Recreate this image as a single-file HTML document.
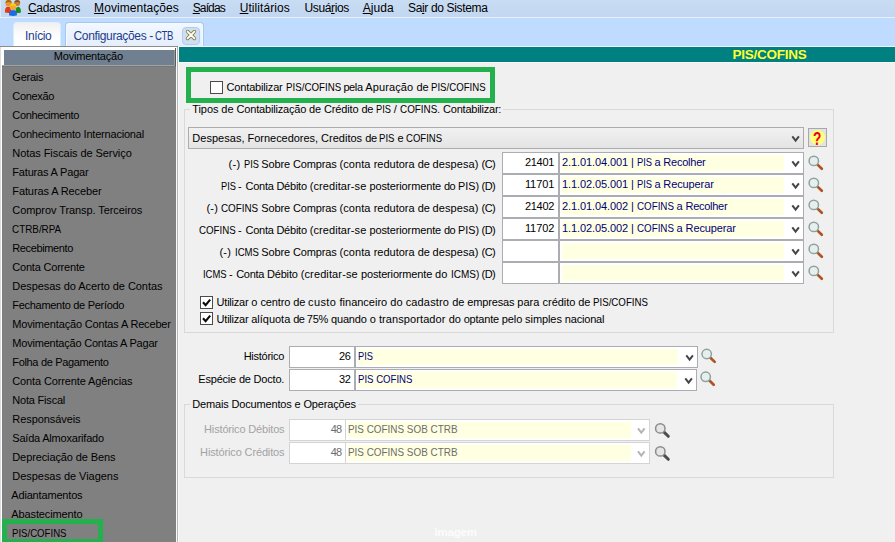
<!DOCTYPE html>
<html><head><meta charset="utf-8"><title>Configurações - CTB</title><style>
html,body{margin:0;padding:0;}
body{width:895px;height:542px;overflow:hidden;position:relative;background:#f0f0f0;font-family:"Liberation Sans",sans-serif;font-size:11px;color:#000;}
.a{position:absolute;white-space:pre;}
.b{box-sizing:border-box;}
.num{height:22px;box-sizing:border-box;border:1px solid #abadb3;background:#fff;}
.cmb{height:22px;box-sizing:border-box;border:1px solid #abadb3;background:#fff;}
.cmb i{position:absolute;left:2px;top:2px;bottom:2px;background:#ffffe1;}
.cb{width:13px;height:13px;box-sizing:border-box;border:1px solid #4a4a4a;background:#fff;}
.gb{border:1px solid #d9d9d9;box-sizing:border-box;}
</style></head><body>
<div class="a" style="left:0;top:0;width:895px;height:17px;background:linear-gradient(#c8dcf3,#c2d7f0);"></div>
<div class="a" style="left:0;top:17px;width:895px;height:1px;background:#e9eff7;"></div>
<div class="a" style="left:0;top:18px;width:895px;height:28px;background:#bfdbff;"></div>
<div class="a" style="left:0;top:46px;width:178px;height:1px;background:#8c8c8c;"></div>
<div class="a" style="left:178px;top:46px;width:717px;height:1px;background:#eef4fc;"></div>
<div class="a" style="left:0;top:0;width:1px;height:17px;background:#dde9f7;"></div>
<svg class="a" style="left:4px;top:0" width="18" height="17" viewBox="0 0 18 17"><path d="M0.9 12.6 Q0.6 6.8 4.2 6.8 Q7 6.8 7 10 L7 12.9 Q3.5 13.4 0.9 12.6Z" fill="#e53a18"/><path d="M11.6 12.9 L11.6 9.5 Q12 6.8 14.2 6.8 Q17 7 16.9 12.5 Q14 13.3 11.6 12.9Z" fill="#1c8c1c"/><circle cx="4.6" cy="3.4" r="3.1" fill="#e8982e"/><path d="M1.5 3.2 A3.1 3.1 0 0 1 7.7 3.2 Q4.6 0.8 1.5 3.2Z" fill="#a8620e"/><circle cx="13.2" cy="3.2" r="2.9" fill="#c9813a"/><path d="M10.3 3 A2.9 2.9 0 0 1 16.1 3 Q13.2 0.9 10.3 3Z" fill="#8a5220"/><path d="M5 15.2 Q4.8 10 9 10 Q13.2 10 13 15.2 Q9 16.6 5 15.2Z" fill="#1c6be2"/><circle cx="9.1" cy="7" r="3.2" fill="#f4a53c"/><path d="M5.9 6.6 A3.2 3.2 0 0 1 12.3 6.6 Q9.1 4.2 5.9 6.6Z" fill="#f6d400"/></svg>
<div class="a b" style="left:13px;top:22px;width:48px;height:24px;border:1px solid #d3f0ff;border-top-color:#e6eef6;border-bottom:none;border-radius:4px 4px 0 0;background:linear-gradient(#f0f0f0,#fbfbfb 45%,#fff 70%);"></div>
<div class="a b" style="left:65px;top:22px;width:139px;height:24px;border:1px solid #a9c6ee;border-bottom:none;border-radius:4px 4px 0 0;background:linear-gradient(#f3f8ff,#e4eefb);box-shadow:inset -1px 1px 0 #f4fbff,inset 1px 0 0 #f4fbff;"></div>
<div class="a b" style="left:182px;top:27px;width:18px;height:18px;border:1px solid #b3cbec;border-radius:4px;background:#cddff5;"></div>
<svg class="a" style="left:184.5px;top:29.4px" width="12" height="12" viewBox="0 0 12 12"><path d="M2.6 2.6 L9.4 9.4 M9.4 2.6 L2.6 9.4" stroke="#8a7a35" stroke-width="3.5" stroke-linecap="round"/><path d="M2.6 2.6 L9.4 9.4 M9.4 2.6 L2.6 9.4" stroke="#fff" stroke-width="1.9" stroke-linecap="round"/></svg>
<div class="a" style="left:0;top:47px;width:1px;height:495px;background:#dcdcdc;"></div>
<div class="a" style="left:1px;top:47px;width:175px;height:19px;background:#fff;"></div>
<div class="a" style="left:1px;top:66px;width:1px;height:476px;background:#fff;"></div>
<div class="a" style="left:2px;top:66px;width:174px;height:476px;background:#808080;"></div>
<div class="a" style="left:2px;top:65px;width:173px;height:1px;background:#a2a2a2;"></div>
<div class="a" style="left:2px;top:66px;width:174px;height:1px;background:#767676;"></div>
<div class="a" style="left:4px;top:50px;width:170px;height:15px;background:#708090;"></div>
<div class="a" style="left:174px;top:50px;width:1px;height:16px;background:#9a9a9a;"></div>
<div class="a" style="left:175px;top:48px;width:1px;height:18px;background:#5a5a5a;"></div>
<div class="a" style="left:176px;top:47px;width:3px;height:495px;background:#fafafa;"></div>
<div class="a" style="left:177px;top:47px;width:1px;height:495px;background:#b4b4b4;"></div>
<div class="a b" style="left:2px;top:519px;width:101px;height:25px;border:5px solid #22b14c;"></div>
<div class="a" style="left:179px;top:47px;width:716px;height:15px;background:#008080;"></div>
<div class="a" style="left:179px;top:62px;width:716px;height:1px;background:#fbfbfb;"></div>
<div class="a b" style="left:186px;top:67px;width:309px;height:36px;border:5px solid #22b14c;"></div>
<div class="a cb" style="left:210px;top:81px"></div>
<div class="a gb" style="left:184px;top:109px;width:650px;height:224px;"></div>
<div class="a" style="left:190px;top:104px;width:313px;height:10px;background:#f0f0f0;"></div>
<div class="a b" style="left:188px;top:127px;width:616px;height:22px;border:1px solid #acacac;background:linear-gradient(#f1f1f1,#e4e4e4);"></div>
<svg class="a" style="left:790px;top:135px" width="11" height="9" viewBox="0 0 11 9"><path transform="translate(0.6 0.1)" d="M1.7 1.3 L5 5.5 L8.3 1.3" fill="none" stroke="#454545" stroke-width="2"/></svg>
<div class="a b" style="left:808px;top:128px;width:19px;height:19px;border:1px solid #a8a8a8;background:#e3e3e3;"></div>
<div class="a" style="left:810px;top:130px;width:15px;height:15px;border-radius:8px;background:#ffff78;"></div>
<div class="a num" style="left:502px;width:57px;top:152px"></div>
<div class="a cmb" style="left:559px;width:245px;top:152px"><i style="width:222px"></i></div>
<svg class="a" style="left:790px;top:160px" width="11" height="9" viewBox="0 0 11 9"><path transform="translate(0.6 0.1)" d="M1.7 1.3 L5 5.5 L8.3 1.3" fill="none" stroke="#454545" stroke-width="2"/></svg>
<svg class="a" style="left:806px;top:153px" width="19" height="19" viewBox="0 0 19 19"><g transform="translate(0.8 0.9)"><line x1="10.7" y1="10.7" x2="15" y2="14.9" stroke="#ad5422" stroke-width="2.7" stroke-linecap="round"/><circle cx="7" cy="7" r="4.7" fill="#e7eeee" stroke="#8da2a0" stroke-width="1.5"/></g></svg>
<div class="a num" style="left:502px;width:57px;top:174px"></div>
<div class="a cmb" style="left:559px;width:245px;top:174px"><i style="width:222px"></i></div>
<svg class="a" style="left:790px;top:182px" width="11" height="9" viewBox="0 0 11 9"><path transform="translate(0.6 0.1)" d="M1.7 1.3 L5 5.5 L8.3 1.3" fill="none" stroke="#454545" stroke-width="2"/></svg>
<svg class="a" style="left:806px;top:175px" width="19" height="19" viewBox="0 0 19 19"><g transform="translate(0.8 0.9)"><line x1="10.7" y1="10.7" x2="15" y2="14.9" stroke="#ad5422" stroke-width="2.7" stroke-linecap="round"/><circle cx="7" cy="7" r="4.7" fill="#e7eeee" stroke="#8da2a0" stroke-width="1.5"/></g></svg>
<div class="a num" style="left:502px;width:57px;top:196px"></div>
<div class="a cmb" style="left:559px;width:245px;top:196px"><i style="width:222px"></i></div>
<svg class="a" style="left:790px;top:204px" width="11" height="9" viewBox="0 0 11 9"><path transform="translate(0.6 0.1)" d="M1.7 1.3 L5 5.5 L8.3 1.3" fill="none" stroke="#454545" stroke-width="2"/></svg>
<svg class="a" style="left:806px;top:197px" width="19" height="19" viewBox="0 0 19 19"><g transform="translate(0.8 0.9)"><line x1="10.7" y1="10.7" x2="15" y2="14.9" stroke="#ad5422" stroke-width="2.7" stroke-linecap="round"/><circle cx="7" cy="7" r="4.7" fill="#e7eeee" stroke="#8da2a0" stroke-width="1.5"/></g></svg>
<div class="a num" style="left:502px;width:57px;top:218px"></div>
<div class="a cmb" style="left:559px;width:245px;top:218px"><i style="width:222px"></i></div>
<svg class="a" style="left:790px;top:226px" width="11" height="9" viewBox="0 0 11 9"><path transform="translate(0.6 0.1)" d="M1.7 1.3 L5 5.5 L8.3 1.3" fill="none" stroke="#454545" stroke-width="2"/></svg>
<svg class="a" style="left:806px;top:219px" width="19" height="19" viewBox="0 0 19 19"><g transform="translate(0.8 0.9)"><line x1="10.7" y1="10.7" x2="15" y2="14.9" stroke="#ad5422" stroke-width="2.7" stroke-linecap="round"/><circle cx="7" cy="7" r="4.7" fill="#e7eeee" stroke="#8da2a0" stroke-width="1.5"/></g></svg>
<div class="a num" style="left:502px;width:57px;top:240px"></div>
<div class="a cmb" style="left:559px;width:245px;top:240px"><i style="width:222px"></i></div>
<svg class="a" style="left:790px;top:248px" width="11" height="9" viewBox="0 0 11 9"><path transform="translate(0.6 0.1)" d="M1.7 1.3 L5 5.5 L8.3 1.3" fill="none" stroke="#454545" stroke-width="2"/></svg>
<svg class="a" style="left:806px;top:241px" width="19" height="19" viewBox="0 0 19 19"><g transform="translate(0.8 0.9)"><line x1="10.7" y1="10.7" x2="15" y2="14.9" stroke="#ad5422" stroke-width="2.7" stroke-linecap="round"/><circle cx="7" cy="7" r="4.7" fill="#e7eeee" stroke="#8da2a0" stroke-width="1.5"/></g></svg>
<div class="a num" style="left:502px;width:57px;top:262px"></div>
<div class="a cmb" style="left:559px;width:245px;top:262px"><i style="width:222px"></i></div>
<svg class="a" style="left:790px;top:270px" width="11" height="9" viewBox="0 0 11 9"><path transform="translate(0.6 0.1)" d="M1.7 1.3 L5 5.5 L8.3 1.3" fill="none" stroke="#454545" stroke-width="2"/></svg>
<svg class="a" style="left:806px;top:263px" width="19" height="19" viewBox="0 0 19 19"><g transform="translate(0.8 0.9)"><line x1="10.7" y1="10.7" x2="15" y2="14.9" stroke="#ad5422" stroke-width="2.7" stroke-linecap="round"/><circle cx="7" cy="7" r="4.7" fill="#e7eeee" stroke="#8da2a0" stroke-width="1.5"/></g></svg>
<div class="a cb" style="left:200px;top:296px"></div>
<svg class="a" style="left:201px;top:297px" width="11" height="11" viewBox="0 0 11 11"><path d="M2 5.2 L4.6 8.2 L9.2 2.6" fill="none" stroke="#0a0a0a" stroke-width="2.1"/></svg>
<div class="a cb" style="left:200px;top:312px"></div>
<svg class="a" style="left:201px;top:313px" width="11" height="11" viewBox="0 0 11 11"><path d="M2 5.2 L4.6 8.2 L9.2 2.6" fill="none" stroke="#0a0a0a" stroke-width="2.1"/></svg>
<div class="a num" style="left:289px;width:66px;top:346px"></div>
<div class="a cmb" style="left:355px;width:343px;top:346px"><i style="width:320px"></i></div>
<svg class="a" style="left:684px;top:354px" width="11" height="9" viewBox="0 0 11 9"><path transform="translate(0.6 0.1)" d="M1.7 1.3 L5 5.5 L8.3 1.3" fill="none" stroke="#454545" stroke-width="2"/></svg>
<svg class="a" style="left:699px;top:347px" width="19" height="19" viewBox="0 0 19 19"><g transform="translate(0.7 0.0)"><line x1="10.7" y1="10.7" x2="15" y2="14.9" stroke="#ad5422" stroke-width="2.7" stroke-linecap="round"/><circle cx="7" cy="7" r="4.7" fill="#e7eeee" stroke="#8da2a0" stroke-width="1.5"/></g></svg>
<div class="a num" style="left:289px;width:66px;top:369px"></div>
<div class="a cmb" style="left:355px;width:342px;top:369px"><i style="width:319px"></i></div>
<svg class="a" style="left:683px;top:377px" width="11" height="9" viewBox="0 0 11 9"><path transform="translate(0.6 0.1)" d="M1.7 1.3 L5 5.5 L8.3 1.3" fill="none" stroke="#454545" stroke-width="2"/></svg>
<svg class="a" style="left:698px;top:369px" width="19" height="19" viewBox="0 0 19 19"><g transform="translate(0.7 0.8)"><line x1="10.7" y1="10.7" x2="15" y2="14.9" stroke="#ad5422" stroke-width="2.7" stroke-linecap="round"/><circle cx="7" cy="7" r="4.7" fill="#e7eeee" stroke="#8da2a0" stroke-width="1.5"/></g></svg>
<div class="a gb" style="left:184px;top:404px;width:650px;height:74px;"></div>
<div class="a" style="left:190px;top:399px;width:168px;height:10px;background:#f0f0f0;"></div>
<div class="a num" style="left:289px;width:57px;top:419px;border-color:#d4d4d4"></div>
<div class="a cmb" style="left:345px;width:305px;top:419px;border-color:#d4d4d4"><i style="width:283px"></i></div>
<svg class="a" style="left:636px;top:427px" width="11" height="9" viewBox="0 0 11 9"><path transform="translate(0.3 0.1)" d="M1.7 1.3 L5 5.5 L8.3 1.3" fill="none" stroke="#b4b4b4" stroke-width="2"/></svg>
<svg class="a" style="left:653px;top:421px" width="19" height="19" viewBox="0 0 19 19"><g transform="translate(0.3 0.4)"><line x1="10.7" y1="10.7" x2="15" y2="14.9" stroke="#4c4c4c" stroke-width="3" stroke-linecap="round"/><circle cx="7" cy="7" r="4.7" fill="#e5e5e5" stroke="#8c8c8c" stroke-width="1.5"/></g></svg>
<div class="a num" style="left:289px;width:57px;top:442px;border-color:#d4d4d4"></div>
<div class="a cmb" style="left:345px;width:305px;top:442px;border-color:#d4d4d4"><i style="width:283px"></i></div>
<svg class="a" style="left:636px;top:450px" width="11" height="9" viewBox="0 0 11 9"><path transform="translate(0.3 0.1)" d="M1.7 1.3 L5 5.5 L8.3 1.3" fill="none" stroke="#b4b4b4" stroke-width="2"/></svg>
<svg class="a" style="left:653px;top:444px" width="19" height="19" viewBox="0 0 19 19"><g transform="translate(0.3 0.4)"><line x1="10.7" y1="10.7" x2="15" y2="14.9" stroke="#4c4c4c" stroke-width="3" stroke-linecap="round"/><circle cx="7" cy="7" r="4.7" fill="#e5e5e5" stroke="#8c8c8c" stroke-width="1.5"/></g></svg>
<div class="a" style="top:-0.16px;font-size:12px;line-height:16px;height:16px;letter-spacing:-0.300px;left:27.90px;"><u>C</u>adastros</div>
<div class="a" style="top:-0.16px;font-size:12px;line-height:16px;height:16px;letter-spacing:0.054px;left:94.10px;"><u>M</u>ovimentações</div>
<div class="a" style="top:-0.16px;font-size:12px;line-height:16px;height:16px;letter-spacing:-0.872px;left:192.70px;"><u>S</u>aídas</div>
<div class="a" style="top:-0.16px;font-size:12px;line-height:16px;height:16px;letter-spacing:0.066px;left:239.70px;"><u>U</u>tilitários</div>
<div class="a" style="top:-0.16px;font-size:12px;line-height:16px;height:16px;letter-spacing:-0.380px;left:304.50px;">Usuá<u>r</u>ios</div>
<div class="a" style="top:-0.16px;font-size:12px;line-height:16px;height:16px;letter-spacing:0.099px;left:362.70px;"><u>A</u>juda</div>
<div class="a" style="top:-0.16px;font-size:12px;line-height:16px;height:16px;letter-spacing:-0.343px;left:408.00px;">Sa<u>i</u>r do Sistema</div>
<div class="a" style="top:28.44px;font-size:12px;line-height:16px;height:16px;letter-spacing:-0.417px;left:25.10px;color:#1d3b8f;">Início</div>
<div class="a" style="top:28.44px;font-size:12px;line-height:16px;height:16px;letter-spacing:-0.351px;left:73.50px;color:#1d3b8f;">Configurações </div>
<div class="a" style="top:28.44px;font-size:12px;line-height:16px;height:16px;letter-spacing:-0.722px;left:149.30px;color:#1d3b8f;">- </div>
<div class="a" style="top:28.44px;font-size:12px;line-height:16px;height:16px;transform:scaleX(0.8000);transform-origin:0 0;letter-spacing:-0.438px;left:155.20px;color:#1d3b8f;">CTB</div>
<div class="a" style="top:49.19px;font-size:11px;line-height:14px;height:14px;letter-spacing:-0.204px;left:53.80px;color:#000;">Movimentação</div>
<div class="a" style="top:69.99px;font-size:11px;line-height:14px;height:14px;letter-spacing:-0.221px;left:12.30px;color:#000;">Gerais</div>
<div class="a" style="top:88.99px;font-size:11px;line-height:14px;height:14px;letter-spacing:-0.341px;left:12.30px;color:#000;">Conexão</div>
<div class="a" style="top:107.99px;font-size:11px;line-height:14px;height:14px;letter-spacing:-0.358px;left:12.30px;color:#000;">Conhecimento</div>
<div class="a" style="top:126.99px;font-size:11px;line-height:14px;height:14px;letter-spacing:-0.207px;left:12.30px;color:#000;">Conhecimento Internacional</div>
<div class="a" style="top:145.99px;font-size:11px;line-height:14px;height:14px;letter-spacing:-0.067px;left:12.30px;color:#000;">Notas Fiscais de Serviço</div>
<div class="a" style="top:164.99px;font-size:11px;line-height:14px;height:14px;letter-spacing:-0.178px;left:12.30px;color:#000;">Faturas A Pagar</div>
<div class="a" style="top:183.99px;font-size:11px;line-height:14px;height:14px;letter-spacing:-0.107px;left:12.30px;color:#000;">Faturas A Receber</div>
<div class="a" style="top:202.99px;font-size:11px;line-height:14px;height:14px;letter-spacing:-0.077px;left:12.30px;color:#000;">Comprov Transp. Terceiros</div>
<div class="a" style="top:221.99px;font-size:11px;line-height:14px;height:14px;transform:scaleX(0.8976);transform-origin:0 0;letter-spacing:0.000px;left:12.30px;color:#000;">CTRB/RPA</div>
<div class="a" style="top:240.99px;font-size:11px;line-height:14px;height:14px;letter-spacing:-0.383px;left:12.30px;color:#000;">Recebimento</div>
<div class="a" style="top:259.99px;font-size:11px;line-height:14px;height:14px;letter-spacing:-0.201px;left:12.30px;color:#000;">Conta Corrente</div>
<div class="a" style="top:278.99px;font-size:11px;line-height:14px;height:14px;letter-spacing:-0.054px;left:12.30px;color:#000;">Despesas do Acerto de Contas</div>
<div class="a" style="top:297.99px;font-size:11px;line-height:14px;height:14px;letter-spacing:-0.292px;left:12.30px;color:#000;">Fechamento de Período</div>
<div class="a" style="top:316.99px;font-size:11px;line-height:14px;height:14px;letter-spacing:-0.163px;left:12.30px;color:#000;">Movimentação Contas A Receber</div>
<div class="a" style="top:335.99px;font-size:11px;line-height:14px;height:14px;letter-spacing:-0.205px;left:12.30px;color:#000;">Movimentação Contas A Pagar</div>
<div class="a" style="top:354.99px;font-size:11px;line-height:14px;height:14px;letter-spacing:-0.332px;left:12.30px;color:#000;">Folha de Pagamento</div>
<div class="a" style="top:373.99px;font-size:11px;line-height:14px;height:14px;letter-spacing:-0.124px;left:12.30px;color:#000;">Conta Corrente Agências</div>
<div class="a" style="top:392.99px;font-size:11px;line-height:14px;height:14px;letter-spacing:-0.203px;left:12.30px;color:#000;">Nota Fiscal</div>
<div class="a" style="top:411.99px;font-size:11px;line-height:14px;height:14px;letter-spacing:-0.072px;left:12.30px;color:#000;">Responsáveis</div>
<div class="a" style="top:430.99px;font-size:11px;line-height:14px;height:14px;letter-spacing:-0.211px;left:12.30px;color:#000;">Saída Almoxarifado</div>
<div class="a" style="top:449.99px;font-size:11px;line-height:14px;height:14px;letter-spacing:-0.116px;left:12.30px;color:#000;">Depreciação de Bens</div>
<div class="a" style="top:468.99px;font-size:11px;line-height:14px;height:14px;letter-spacing:-0.040px;left:12.30px;color:#000;">Despesas de Viagens</div>
<div class="a" style="top:487.99px;font-size:11px;line-height:14px;height:14px;letter-spacing:-0.174px;left:11.30px;color:#000;">Adiantamentos</div>
<div class="a" style="top:506.99px;font-size:11px;line-height:14px;height:14px;letter-spacing:-0.122px;left:11.30px;color:#000;">Abastecimento</div>
<div class="a" style="top:525.99px;font-size:11px;line-height:14px;height:14px;transform:scaleX(0.8742);transform-origin:0 0;letter-spacing:0.000px;left:12.30px;color:#000;">PIS/COFINS</div>
<div class="a" style="top:46.02px;font-size:13.5px;line-height:18px;height:18px;transform:scaleX(1.0000);transform-origin:0 0;letter-spacing:-0.257px;left:732.60px;color:#ffff2e;font-weight:bold;">PIS/COFINS</div>
<div class="a" style="top:80.49px;font-size:11px;line-height:14px;height:14px;letter-spacing:-0.172px;left:226.60px;">Contabilizar </div>
<div class="a" style="top:80.49px;font-size:11px;line-height:14px;height:14px;transform:scaleX(0.8852);transform-origin:0 0;letter-spacing:0.000px;left:285.50px;">PIS/COFINS </div>
<div class="a" style="top:80.49px;font-size:11px;line-height:14px;height:14px;letter-spacing:-0.392px;left:343.40px;">pela </div>
<div class="a" style="top:80.49px;font-size:11px;line-height:14px;height:14px;letter-spacing:0.116px;left:365.30px;">Apuração </div>
<div class="a" style="top:80.49px;font-size:11px;line-height:14px;height:14px;letter-spacing:-0.199px;left:416.50px;">de </div>
<div class="a" style="top:80.49px;font-size:11px;line-height:14px;height:14px;transform:scaleX(0.8774);transform-origin:0 0;letter-spacing:0.000px;left:431.20px;">PIS/COFINS</div>
<div class="a" style="top:102.49px;font-size:11px;line-height:14px;height:14px;letter-spacing:-0.091px;left:192.30px;">Tipos </div>
<div class="a" style="top:102.49px;font-size:11px;line-height:14px;height:14px;letter-spacing:-0.032px;left:221.30px;">de </div>
<div class="a" style="top:102.49px;font-size:11px;line-height:14px;height:14px;letter-spacing:-0.175px;left:236.50px;">Contabilização </div>
<div class="a" style="top:102.49px;font-size:11px;line-height:14px;height:14px;letter-spacing:-0.166px;left:309.10px;">de </div>
<div class="a" style="top:102.49px;font-size:11px;line-height:14px;height:14px;letter-spacing:-0.129px;left:323.90px;">Crédito </div>
<div class="a" style="top:102.49px;font-size:11px;line-height:14px;height:14px;letter-spacing:-0.166px;left:361.40px;">de </div>
<div class="a" style="top:102.49px;font-size:11px;line-height:14px;height:14px;transform:scaleX(0.8415);transform-origin:0 0;letter-spacing:0.000px;left:376.20px;">PIS </div>
<div class="a" style="top:102.49px;font-size:11px;line-height:14px;height:14px;transform:scaleX(1.0000);transform-origin:0 0;letter-spacing:0.238px;left:393.70px;">/ </div>
<div class="a" style="top:102.49px;font-size:11px;line-height:14px;height:14px;transform:scaleX(0.8978);transform-origin:0 0;letter-spacing:0.000px;left:400.30px;">COFINS. </div>
<div class="a" style="top:102.49px;font-size:11px;line-height:14px;height:14px;letter-spacing:-0.237px;left:443.10px;">Contabilizar:</div>
<div class="a" style="top:130.89px;font-size:11px;line-height:14px;height:14px;letter-spacing:0.027px;left:192.30px;">Despesas, </div>
<div class="a" style="top:130.89px;font-size:11px;line-height:14px;height:14px;letter-spacing:-0.035px;left:247.60px;">Fornecedores, </div>
<div class="a" style="top:130.89px;font-size:11px;line-height:14px;height:14px;letter-spacing:0.008px;left:321.10px;">Creditos </div>
<div class="a" style="top:130.89px;font-size:11px;line-height:14px;height:14px;letter-spacing:-0.366px;left:365.20px;">de </div>
<div class="a" style="top:130.89px;font-size:11px;line-height:14px;height:14px;transform:scaleX(0.8703);transform-origin:0 0;letter-spacing:0.000px;left:379.40px;">PIS </div>
<div class="a" style="top:130.89px;font-size:11px;line-height:14px;height:14px;letter-spacing:-0.144px;left:397.50px;">e </div>
<div class="a" style="top:130.89px;font-size:11px;line-height:14px;height:14px;transform:scaleX(0.8686);transform-origin:0 0;letter-spacing:0.000px;left:406.40px;">COFINS</div>
<div class="a" style="top:127.64px;font-size:17.5px;line-height:23px;height:23px;left:813.20px;color:#e8001c;font-weight:bold;transform:scaleX(0.78);transform-origin:0 0;">?</div>
<div class="a" style="top:156.59px;font-size:11px;line-height:14px;height:14px;letter-spacing:0.288px;left:228.60px;">(-) </div>
<div class="a" style="top:156.59px;font-size:11px;line-height:14px;height:14px;transform:scaleX(0.8367);transform-origin:0 0;letter-spacing:0.000px;left:243.80px;">PIS </div>
<div class="a" style="top:156.59px;font-size:11px;line-height:14px;height:14px;letter-spacing:-0.087px;left:261.20px;">Sobre </div>
<div class="a" style="top:156.59px;font-size:11px;line-height:14px;height:14px;letter-spacing:-0.173px;left:293.10px;">Compras </div>
<div class="a" style="top:156.59px;font-size:11px;line-height:14px;height:14px;letter-spacing:0.094px;left:339.40px;">(conta </div>
<div class="a" style="top:156.59px;font-size:11px;line-height:14px;height:14px;letter-spacing:-0.003px;left:373.70px;">redutora </div>
<div class="a" style="top:156.59px;font-size:11px;line-height:14px;height:14px;letter-spacing:-0.132px;left:417.70px;">de </div>
<div class="a" style="top:156.59px;font-size:11px;line-height:14px;height:14px;letter-spacing:0.076px;left:432.60px;">despesa) </div>
<div class="a" style="top:156.59px;font-size:11px;line-height:14px;height:14px;letter-spacing:-0.591px;left:481.60px;">(C)</div>
<div class="a" style="top:154.89px;font-size:11px;line-height:14px;height:14px;letter-spacing:-0.273px;left:524.90px;">21401</div>
<div class="a" style="top:154.89px;font-size:11px;line-height:14px;height:14px;letter-spacing:-0.096px;left:562.00px;color:#00007c;">2.1.01.04.001 </div>
<div class="a" style="top:154.89px;font-size:11px;line-height:14px;height:14px;letter-spacing:-0.111px;left:631.00px;color:#00007c;">| </div>
<div class="a" style="top:154.89px;font-size:11px;line-height:14px;height:14px;transform:scaleX(0.8511);transform-origin:0 0;letter-spacing:0.000px;left:636.70px;color:#00007c;">PIS </div>
<div class="a" style="top:154.89px;font-size:11px;line-height:14px;height:14px;letter-spacing:-0.144px;left:654.40px;color:#00007c;">a </div>
<div class="a" style="top:154.89px;font-size:11px;line-height:14px;height:14px;letter-spacing:-0.233px;left:663.30px;color:#00007c;">Recolher</div>
<div class="a" style="top:178.59px;font-size:11px;line-height:14px;height:14px;transform:scaleX(0.8415);transform-origin:0 0;letter-spacing:0.000px;left:220.60px;">PIS </div>
<div class="a" style="top:178.59px;font-size:11px;line-height:14px;height:14px;letter-spacing:0.333px;left:238.10px;">- </div>
<div class="a" style="top:178.59px;font-size:11px;line-height:14px;height:14px;letter-spacing:-0.254px;left:245.50px;">Conta </div>
<div class="a" style="top:178.59px;font-size:11px;line-height:14px;height:14px;letter-spacing:-0.223px;left:276.40px;">Débito </div>
<div class="a" style="top:178.59px;font-size:11px;line-height:14px;height:14px;letter-spacing:0.086px;left:309.70px;">(creditar-se </div>
<div class="a" style="top:178.59px;font-size:11px;line-height:14px;height:14px;letter-spacing:-0.129px;left:369.50px;">posteriormente </div>
<div class="a" style="top:178.59px;font-size:11px;line-height:14px;height:14px;letter-spacing:-0.566px;left:444.00px;">do </div>
<div class="a" style="top:178.59px;font-size:11px;line-height:14px;height:14px;transform:scaleX(0.9815);transform-origin:0 0;letter-spacing:0.000px;left:457.60px;">PIS) </div>
<div class="a" style="top:178.59px;font-size:11px;line-height:14px;height:14px;letter-spacing:-0.591px;left:481.60px;">(D)</div>
<div class="a" style="top:176.89px;font-size:11px;line-height:14px;height:14px;letter-spacing:-0.070px;left:524.90px;">11701</div>
<div class="a" style="top:176.89px;font-size:11px;line-height:14px;height:14px;letter-spacing:-0.096px;left:562.00px;color:#00007c;">1.1.02.05.001 </div>
<div class="a" style="top:176.89px;font-size:11px;line-height:14px;height:14px;letter-spacing:-0.111px;left:631.00px;color:#00007c;">| </div>
<div class="a" style="top:176.89px;font-size:11px;line-height:14px;height:14px;transform:scaleX(0.8511);transform-origin:0 0;letter-spacing:0.000px;left:636.70px;color:#00007c;">PIS </div>
<div class="a" style="top:176.89px;font-size:11px;line-height:14px;height:14px;letter-spacing:-0.144px;left:654.40px;color:#00007c;">a </div>
<div class="a" style="top:176.89px;font-size:11px;line-height:14px;height:14px;letter-spacing:-0.107px;left:663.30px;color:#00007c;">Recuperar</div>
<div class="a" style="top:200.59px;font-size:11px;line-height:14px;height:14px;letter-spacing:0.213px;left:206.40px;">(-) </div>
<div class="a" style="top:200.59px;font-size:11px;line-height:14px;height:14px;transform:scaleX(0.8941);transform-origin:0 0;letter-spacing:0.000px;left:221.30px;">COFINS </div>
<div class="a" style="top:200.59px;font-size:11px;line-height:14px;height:14px;letter-spacing:-0.087px;left:261.20px;">Sobre </div>
<div class="a" style="top:200.59px;font-size:11px;line-height:14px;height:14px;letter-spacing:-0.173px;left:293.10px;">Compras </div>
<div class="a" style="top:200.59px;font-size:11px;line-height:14px;height:14px;letter-spacing:0.094px;left:339.40px;">(conta </div>
<div class="a" style="top:200.59px;font-size:11px;line-height:14px;height:14px;letter-spacing:-0.003px;left:373.70px;">redutora </div>
<div class="a" style="top:200.59px;font-size:11px;line-height:14px;height:14px;letter-spacing:-0.132px;left:417.70px;">de </div>
<div class="a" style="top:200.59px;font-size:11px;line-height:14px;height:14px;letter-spacing:0.076px;left:432.60px;">despesa) </div>
<div class="a" style="top:200.59px;font-size:11px;line-height:14px;height:14px;letter-spacing:-0.591px;left:481.60px;">(C)</div>
<div class="a" style="top:198.89px;font-size:11px;line-height:14px;height:14px;letter-spacing:-0.273px;left:524.90px;">21402</div>
<div class="a" style="top:198.89px;font-size:11px;line-height:14px;height:14px;letter-spacing:-0.096px;left:562.00px;color:#00007c;">2.1.01.04.002 </div>
<div class="a" style="top:198.89px;font-size:11px;line-height:14px;height:14px;letter-spacing:-0.111px;left:631.00px;color:#00007c;">| </div>
<div class="a" style="top:198.89px;font-size:11px;line-height:14px;height:14px;transform:scaleX(0.8896);transform-origin:0 0;letter-spacing:0.000px;left:636.70px;color:#00007c;">COFINS </div>
<div class="a" style="top:198.89px;font-size:11px;line-height:14px;height:14px;letter-spacing:0.006px;left:676.40px;color:#00007c;">a </div>
<div class="a" style="top:198.89px;font-size:11px;line-height:14px;height:14px;letter-spacing:-0.290px;left:685.60px;color:#00007c;">Recolher</div>
<div class="a" style="top:222.59px;font-size:11px;line-height:14px;height:14px;transform:scaleX(0.8852);transform-origin:0 0;letter-spacing:0.000px;left:198.60px;">COFINS </div>
<div class="a" style="top:222.59px;font-size:11px;line-height:14px;height:14px;letter-spacing:0.333px;left:238.10px;">- </div>
<div class="a" style="top:222.59px;font-size:11px;line-height:14px;height:14px;letter-spacing:-0.254px;left:245.50px;">Conta </div>
<div class="a" style="top:222.59px;font-size:11px;line-height:14px;height:14px;letter-spacing:-0.223px;left:276.40px;">Débito </div>
<div class="a" style="top:222.59px;font-size:11px;line-height:14px;height:14px;letter-spacing:0.086px;left:309.70px;">(creditar-se </div>
<div class="a" style="top:222.59px;font-size:11px;line-height:14px;height:14px;letter-spacing:-0.129px;left:369.50px;">posteriormente </div>
<div class="a" style="top:222.59px;font-size:11px;line-height:14px;height:14px;letter-spacing:-0.566px;left:444.00px;">do </div>
<div class="a" style="top:222.59px;font-size:11px;line-height:14px;height:14px;transform:scaleX(0.9815);transform-origin:0 0;letter-spacing:0.000px;left:457.60px;">PIS) </div>
<div class="a" style="top:222.59px;font-size:11px;line-height:14px;height:14px;letter-spacing:-0.591px;left:481.60px;">(D)</div>
<div class="a" style="top:220.89px;font-size:11px;line-height:14px;height:14px;letter-spacing:-0.070px;left:524.90px;">11702</div>
<div class="a" style="top:220.89px;font-size:11px;line-height:14px;height:14px;letter-spacing:-0.096px;left:562.00px;color:#00007c;">1.1.02.05.002 </div>
<div class="a" style="top:220.89px;font-size:11px;line-height:14px;height:14px;letter-spacing:-0.111px;left:631.00px;color:#00007c;">| </div>
<div class="a" style="top:220.89px;font-size:11px;line-height:14px;height:14px;transform:scaleX(0.8896);transform-origin:0 0;letter-spacing:0.000px;left:636.70px;color:#00007c;">COFINS </div>
<div class="a" style="top:220.89px;font-size:11px;line-height:14px;height:14px;letter-spacing:0.006px;left:676.40px;color:#00007c;">a </div>
<div class="a" style="top:220.89px;font-size:11px;line-height:14px;height:14px;letter-spacing:-0.132px;left:685.60px;color:#00007c;">Recuperar</div>
<div class="a" style="top:244.59px;font-size:11px;line-height:14px;height:14px;letter-spacing:0.288px;left:219.40px;">(-) </div>
<div class="a" style="top:244.59px;font-size:11px;line-height:14px;height:14px;transform:scaleX(0.8703);transform-origin:0 0;letter-spacing:0.000px;left:234.60px;">ICMS </div>
<div class="a" style="top:244.59px;font-size:11px;line-height:14px;height:14px;letter-spacing:-0.087px;left:261.20px;">Sobre </div>
<div class="a" style="top:244.59px;font-size:11px;line-height:14px;height:14px;letter-spacing:-0.173px;left:293.10px;">Compras </div>
<div class="a" style="top:244.59px;font-size:11px;line-height:14px;height:14px;letter-spacing:0.094px;left:339.40px;">(conta </div>
<div class="a" style="top:244.59px;font-size:11px;line-height:14px;height:14px;letter-spacing:-0.003px;left:373.70px;">redutora </div>
<div class="a" style="top:244.59px;font-size:11px;line-height:14px;height:14px;letter-spacing:-0.132px;left:417.70px;">de </div>
<div class="a" style="top:244.59px;font-size:11px;line-height:14px;height:14px;letter-spacing:0.076px;left:432.60px;">despesa) </div>
<div class="a" style="top:244.59px;font-size:11px;line-height:14px;height:14px;letter-spacing:-0.591px;left:481.60px;">(C)</div>
<div class="a" style="top:266.59px;font-size:11px;line-height:14px;height:14px;transform:scaleX(0.8573);transform-origin:0 0;letter-spacing:0.000px;left:202.70px;">ICMS </div>
<div class="a" style="top:266.59px;font-size:11px;line-height:14px;height:14px;letter-spacing:0.283px;left:228.90px;">- </div>
<div class="a" style="top:266.59px;font-size:11px;line-height:14px;height:14px;letter-spacing:-0.287px;left:236.20px;">Conta </div>
<div class="a" style="top:266.59px;font-size:11px;line-height:14px;height:14px;letter-spacing:-0.151px;left:266.90px;">Débito </div>
<div class="a" style="top:266.59px;font-size:11px;line-height:14px;height:14px;letter-spacing:0.124px;left:300.70px;">(creditar-se </div>
<div class="a" style="top:266.59px;font-size:11px;line-height:14px;height:14px;letter-spacing:-0.163px;left:361.00px;">posteriormente </div>
<div class="a" style="top:266.59px;font-size:11px;line-height:14px;height:14px;letter-spacing:0.101px;left:435.00px;">do </div>
<div class="a" style="top:266.59px;font-size:11px;line-height:14px;height:14px;transform:scaleX(0.9055);transform-origin:0 0;letter-spacing:0.000px;left:450.60px;">ICMS) </div>
<div class="a" style="top:266.59px;font-size:11px;line-height:14px;height:14px;letter-spacing:-0.591px;left:481.60px;">(D)</div>
<div class="a" style="top:295.29px;font-size:11px;line-height:14px;height:14px;letter-spacing:-0.230px;left:216.60px;">Utilizar </div>
<div class="a" style="top:295.29px;font-size:11px;line-height:14px;height:14px;letter-spacing:0.006px;left:251.20px;">o </div>
<div class="a" style="top:295.29px;font-size:11px;line-height:14px;height:14px;letter-spacing:-0.106px;left:260.40px;">centro </div>
<div class="a" style="top:295.29px;font-size:11px;line-height:14px;height:14px;letter-spacing:-0.166px;left:293.30px;">de </div>
<div class="a" style="top:295.29px;font-size:11px;line-height:14px;height:14px;letter-spacing:0.340px;left:308.10px;">custo </div>
<div class="a" style="top:295.29px;font-size:11px;line-height:14px;height:14px;letter-spacing:0.003px;left:339.50px;">financeiro </div>
<div class="a" style="top:295.29px;font-size:11px;line-height:14px;height:14px;letter-spacing:0.034px;left:390.30px;">do </div>
<div class="a" style="top:295.29px;font-size:11px;line-height:14px;height:14px;letter-spacing:0.150px;left:405.70px;">cadastro </div>
<div class="a" style="top:295.29px;font-size:11px;line-height:14px;height:14px;letter-spacing:-0.099px;left:452.30px;">de </div>
<div class="a" style="top:295.29px;font-size:11px;line-height:14px;height:14px;letter-spacing:-0.151px;left:467.30px;">empresas </div>
<div class="a" style="top:295.29px;font-size:11px;line-height:14px;height:14px;letter-spacing:0.044px;left:517.30px;">para </div>
<div class="a" style="top:295.29px;font-size:11px;line-height:14px;height:14px;letter-spacing:-0.060px;left:542.60px;">crédito </div>
<div class="a" style="top:295.29px;font-size:11px;line-height:14px;height:14px;letter-spacing:-0.166px;left:578.20px;">de </div>
<div class="a" style="top:295.29px;font-size:11px;line-height:14px;height:14px;transform:scaleX(0.8822);transform-origin:0 0;letter-spacing:0.000px;left:593.00px;">PIS/COFINS</div>
<div class="a" style="top:312.09px;font-size:11px;line-height:14px;height:14px;letter-spacing:-0.230px;left:216.60px;">Utilizar </div>
<div class="a" style="top:312.09px;font-size:11px;line-height:14px;height:14px;letter-spacing:-0.011px;left:251.20px;">alíquota </div>
<div class="a" style="top:312.09px;font-size:11px;line-height:14px;height:14px;letter-spacing:-0.599px;left:293.30px;">de </div>
<div class="a" style="top:312.09px;font-size:11px;line-height:14px;height:14px;letter-spacing:-0.245px;left:306.80px;">75% </div>
<div class="a" style="top:312.09px;font-size:11px;line-height:14px;height:14px;letter-spacing:-0.124px;left:330.90px;">quando </div>
<div class="a" style="top:312.09px;font-size:11px;line-height:14px;height:14px;letter-spacing:-0.044px;left:369.80px;">o </div>
<div class="a" style="top:312.09px;font-size:11px;line-height:14px;height:14px;letter-spacing:0.094px;left:378.90px;">transportador </div>
<div class="a" style="top:312.09px;font-size:11px;line-height:14px;height:14px;letter-spacing:-0.099px;left:448.70px;">do </div>
<div class="a" style="top:312.09px;font-size:11px;line-height:14px;height:14px;letter-spacing:-0.208px;left:463.70px;">optante </div>
<div class="a" style="top:312.09px;font-size:11px;line-height:14px;height:14px;letter-spacing:-0.112px;left:501.80px;">pelo </div>
<div class="a" style="top:312.09px;font-size:11px;line-height:14px;height:14px;letter-spacing:-0.080px;left:525.10px;">simples </div>
<div class="a" style="top:312.09px;font-size:11px;line-height:14px;height:14px;letter-spacing:-0.183px;left:564.80px;">nacional</div>
<div class="a" style="top:348.79px;font-size:11px;line-height:14px;height:14px;letter-spacing:-0.262px;left:243.70px;">Histórico</div>
<div class="a" style="top:348.79px;font-size:11px;line-height:14px;height:14px;letter-spacing:-0.150px;left:338.90px;">26</div>
<div class="a" style="top:348.79px;font-size:11px;line-height:14px;height:14px;transform:scaleX(0.8458);transform-origin:0 0;letter-spacing:0.000px;left:358.10px;color:#00007c;">PIS</div>
<div class="a" style="top:371.79px;font-size:11px;line-height:14px;height:14px;letter-spacing:-0.199px;left:198.30px;">Espécie de Docto.</div>
<div class="a" style="top:371.79px;font-size:11px;line-height:14px;height:14px;letter-spacing:-0.150px;left:338.90px;">32</div>
<div class="a" style="top:371.79px;font-size:11px;line-height:14px;height:14px;transform:scaleX(0.8726);transform-origin:0 0;letter-spacing:0.000px;left:358.10px;color:#00007c;">PIS COFINS</div>
<div class="a" style="top:397.09px;font-size:11px;line-height:14px;height:14px;letter-spacing:-0.162px;left:192.30px;">Demais Documentos e Operações</div>
<div class="a" style="top:421.79px;font-size:11px;line-height:14px;height:14px;letter-spacing:-0.165px;left:204.10px;color:#a3a3a3;">Histórico Débitos</div>
<div class="a" style="top:421.79px;font-size:11px;line-height:14px;height:14px;letter-spacing:-0.950px;left:330.80px;color:#6d6d6d;">48</div>
<div class="a" style="top:421.79px;font-size:11px;line-height:14px;height:14px;transform:scaleX(0.9002);transform-origin:0 0;letter-spacing:0.000px;left:348.10px;color:#6d6d6d;">PIS COFINS SOB CTRB</div>
<div class="a" style="top:444.79px;font-size:11px;line-height:14px;height:14px;letter-spacing:-0.136px;left:200.10px;color:#a3a3a3;">Histórico Créditos</div>
<div class="a" style="top:444.79px;font-size:11px;line-height:14px;height:14px;letter-spacing:-0.950px;left:330.80px;color:#6d6d6d;">48</div>
<div class="a" style="top:444.79px;font-size:11px;line-height:14px;height:14px;transform:scaleX(0.9002);transform-origin:0 0;letter-spacing:0.000px;left:348.10px;color:#6d6d6d;">PIS COFINS SOB CTRB</div>
<div class="a" style="top:525.22px;font-size:11.5px;line-height:15px;height:15px;letter-spacing:-0.194px;left:434.50px;color:#fcfcfc;font-weight:bold;">imagem</div>
</body></html>
